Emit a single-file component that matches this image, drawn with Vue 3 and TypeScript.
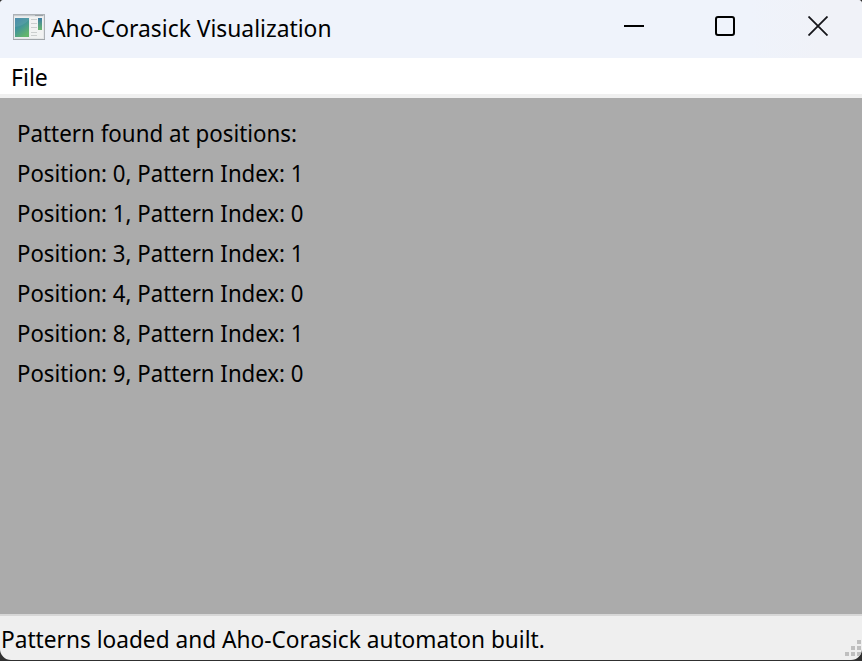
<script setup lang="ts">
interface Match {
  position: number
  pattern: number
}

const matches: Match[] = [
  { position: 0, pattern: 1 },
  { position: 1, pattern: 0 },
  { position: 3, pattern: 1 },
  { position: 4, pattern: 0 },
  { position: 8, pattern: 1 },
  { position: 9, pattern: 0 },
]
</script>

<template>
  <div class="desktop">
    <div class="window">
      <header class="titlebar">
        <svg class="app-icon" width="32" height="27" viewBox="0 0 32 27">
          <defs>
            <linearGradient id="pane" x1="0" y1="0" x2="0.6" y2="1">
              <stop offset="0" stop-color="#3b7fa5" />
              <stop offset="0.5" stop-color="#42949a" />
              <stop offset="1" stop-color="#62b56c" />
            </linearGradient>
            <linearGradient id="side" x1="0" y1="0" x2="0" y2="1">
              <stop offset="0" stop-color="#3d7ba6" />
              <stop offset="1" stop-color="#67b86c" />
            </linearGradient>
          </defs>
          <rect x="0.5" y="0.5" width="31" height="25" fill="#e5e7e8" stroke="#acb1b6" />
          <path d="M1 1.5H31" stroke="#c6cacd" />
          <path d="M22 1.5H30" stroke="#9da3a8" />
          <path d="M0 25.5H32" stroke="#a0a5aa" />
          <rect x="1.5" y="3.5" width="15" height="20" fill="#f4f6f6" />
          <rect x="2" y="4" width="14" height="19" fill="url(#pane)" />
          <path d="M2 13Q10 12 16 6V4H2Z" fill="#fff" opacity="0.09" />
          <rect x="17" y="3" width="13" height="21" fill="#f1f2f2" />
          <path d="M18 5.5H24M18 9.5H24M18 13.5H24M18 18.5H24M18 21.5H24" stroke="#cbcece" />
          <rect x="25" y="4" width="4" height="12" fill="url(#side)" />
        </svg>
        <h1 class="title"><span>Aho-Corasick Visualization</span></h1>
        <div class="controls">
          <svg width="20" height="20" viewBox="0 0 20 20"><path d="M0 10H20" stroke="#000" stroke-width="2" /></svg>
          <svg width="20" height="20" viewBox="0 0 20 20"><rect x="1" y="1" width="18" height="18" rx="2" fill="none" stroke="#000" stroke-width="2" /></svg>
          <svg width="20" height="20" viewBox="0 0 20 20"><path d="M0.5 0.5L19.5 19.5M19.5 0.5L0.5 19.5" stroke="#15151a" stroke-width="1.8" /></svg>
        </div>
      </header>
      <nav class="menubar"><span class="menu">File</span></nav>
      <main class="output">
        <p class="heading"><span>Pattern found at positions:</span></p>
        <p v-for="m in matches" :key="m.position" class="match">
          <span>Position: {{ m.position }}, Pattern Index: {{ m.pattern }}</span>
        </p>
      </main>
      <footer class="statusbar">
        <span class="status">Patterns loaded and Aho-Corasick automaton built.</span>
        <svg class="grip" width="16" height="16" viewBox="0 0 16 16">
          <path d="M12 0h4v4h-4zM6 6h4v4h-4zM12 6h4v4h-4zM0 12h4v4h-4zM6 12h4v4h-4zM12 12h4v4h-4z" fill="#bfbfbf" />
        </svg>
      </footer>
    </div>
  </div>
</template>

<style>
body {
  margin: 0;
  overflow: hidden;
}
</style>

<style scoped>
.desktop {
  box-sizing: border-box;
  width: 862px;
  height: 661px;
  padding-bottom: 1px;
  background: #303030;
  color: #000;
  font: 24px/40px "Noto Sans", "Open Sans", sans-serif;
}
.window {
  display: flex;
  flex-direction: column;
  height: 660px;
  overflow: hidden;
  border-radius: 4px 4px 11px 11px;
  background: #efefef;
  white-space: nowrap;
}
.titlebar {
  display: flex;
  height: 58px;
  background: linear-gradient(90deg, #eff3fb 0 750px, #f0f2f8 820px);
}
.app-icon {
  margin: 14px 6px 0 13px;
}
.title {
  margin: 8px 0 0;
  font: inherit;
}
.controls {
  display: flex;
  gap: 71px;
  margin: 16px 34px 0 auto;
}
.controls svg:last-child {
  margin-left: 2px;
}
.title span,
.menu,
.output span,
.status {
  display: inline-block;
  transform-origin: 0 50%;
}
.title span {
  transform: scaleX(0.951);
}
.menu {
  transform: scaleX(0.96);
}
.heading span {
  transform: scaleX(0.931);
}
.match span {
  transform: scaleX(0.925);
}
.status {
  transform: scaleX(0.944);
}
.menubar {
  box-sizing: border-box;
  height: 40px;
  padding-left: 11px;
  border-bottom: 4px solid #f0f0f0;
  background: #fff;
  line-height: 38px;
}
.output {
  box-sizing: border-box;
  height: 516px;
  padding: 15px 0 0 17px;
  background: #ababab;
}
.output p {
  height: 40px;
  margin: 0;
}
.statusbar {
  display: flex;
  flex: 1;
  justify-content: space-between;
  border-top: 2px solid #d7d7d7;
}
.status {
  margin: 3px 0 0 1px;
}
.grip {
  margin: 24px 1px 0 0;
}
</style>
